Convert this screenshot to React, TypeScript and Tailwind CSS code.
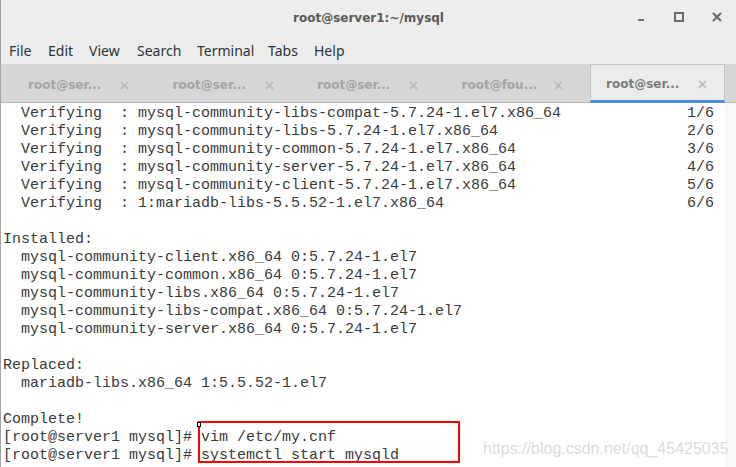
const mono = "font-['Liberation_Mono',monospace]";

const verify = (name: string, n: number) =>
  ('  Verifying  : ' + name).padEnd(76, ' ') + n + '/6';

const lines = [
  verify('mysql-community-libs-compat-5.7.24-1.el7.x86_64', 1),
  verify('mysql-community-libs-5.7.24-1.el7.x86_64', 2),
  verify('mysql-community-common-5.7.24-1.el7.x86_64', 3),
  verify('mysql-community-server-5.7.24-1.el7.x86_64', 4),
  verify('mysql-community-client-5.7.24-1.el7.x86_64', 5),
  verify('1:mariadb-libs-5.5.52-1.el7.x86_64', 6),
  '',
  'Installed:',
  '  mysql-community-client.x86_64 0:5.7.24-1.el7',
  '  mysql-community-common.x86_64 0:5.7.24-1.el7',
  '  mysql-community-libs.x86_64 0:5.7.24-1.el7',
  '  mysql-community-libs-compat.x86_64 0:5.7.24-1.el7',
  '  mysql-community-server.x86_64 0:5.7.24-1.el7',
  '',
  'Replaced:',
  '  mariadb-libs.x86_64 1:5.5.52-1.el7',
  '',
  'Complete!',
  '[root@server1 mysql]# vim /etc/my.cnf',
  '[root@server1 mysql]# systemctl start mysqld',
];

const menus = [
  { label: 'File', w: 'w-[39px]' },
  { label: 'Edit', w: 'w-[41px]' },
  { label: 'View', w: 'w-[48px]' },
  { label: 'Search', w: 'w-[60px]' },
  { label: 'Terminal', w: 'w-[71px]' },
  { label: 'Tabs', w: 'w-[46px]' },
  { label: 'Help', w: 'w-[40px]' },
];

const tabs = ['root@ser...', 'root@ser...', 'root@ser...', 'root@fou...', 'root@ser...'];

function TabClose({ color }: { color: string }) {
  return (
    <svg width="9" height="9" viewBox="0 0 9 9" className="shrink-0">
      <path d="M1 1 L8 8 M8 1 L1 8" stroke={color} strokeWidth="1.3" />
    </svg>
  );
}

export default function App() {
  return (
    <div className="w-[736px] h-[467px] overflow-hidden flex flex-col border-l border-[#a3a3a3] bg-[#ededed]">
      {/* title bar */}
      <div className="h-[33px] grid grid-cols-[1fr_auto_1fr] items-center">
        <div />
        <div className="font-['DejaVu_Sans',sans-serif] font-bold text-[12px] text-[#595959] pt-[2px]">
          root@server1:~/mysql
        </div>
        <div className="flex justify-end items-center gap-[22px] pr-[11px]">
          <svg width="16" height="16" viewBox="0 0 16 16">
            <rect x="5" y="10" width="6" height="2" fill="#6b6b6b" />
          </svg>
          <svg width="16" height="16" viewBox="0 0 16 16">
            <rect x="4" y="4" width="8" height="8" fill="none" stroke="#6b6b6b" strokeWidth="2" />
          </svg>
          <svg width="16" height="16" viewBox="0 0 16 16">
            <path d="M4 4 L12 12 M12 4 L4 12" stroke="#6b6b6b" strokeWidth="2.2" />
          </svg>
        </div>
      </div>

      {/* menu bar */}
      <div className="h-[31px] flex items-center pl-[8px] font-['Noto_Sans',sans-serif] text-[14px] text-[#2e3436] pt-[3px]">
        {menus.map((m) => (
          <span key={m.label} className={m.w}>
            {m.label}
          </span>
        ))}
      </div>

      {/* tabs */}
      <div className="h-[39px] flex items-stretch pl-[11px] gap-[9.5px] bg-[#d6d6d6] border-b border-[#b5b5b5] font-['DejaVu_Sans',sans-serif] font-bold text-[12px]">
        {tabs.map((t, i) => {
          const active = i === tabs.length - 1;
          return (
            <div
              key={i}
              className={
                active
                  ? 'w-[135px] flex items-center bg-[#ececec] border-x border-t border-[#c2c2c2] -mb-px border-b-[3px] border-b-[#4a90d9] pl-[15px] pt-[3px]'
                  : 'w-[135px] flex items-center pl-[16px] pt-[4px]'
              }
            >
              <span className={active ? 'w-[92px] text-[#7b7b7b]' : 'w-[92px] text-[#a3a3a3]'}>{t}</span>
              <TabClose color={active ? '#b4b4b4' : '#b3b3b3'} />
            </div>
          );
        })}
      </div>

      {/* terminal */}
      <div className="flex-1 flex bg-white relative">
        <pre className={`${mono} flex-1 text-[15px] leading-[18px] text-[#3a3a3a] pl-[2px] pt-[2px] whitespace-pre`}>
          {lines.join('\n')}
        </pre>
        <div className="w-[11px] bg-[#f8f8f8]" />

        {/* annotation box */}
        <div className="absolute left-[197px] top-[318px] w-[262px] h-[42px] border-2 border-[#ff0000]" />
        <div className="absolute left-[196px] top-[319px] w-[4px] h-[5px] border border-black bg-white" />

        {/* watermark */}
        <div className="absolute left-[482px] top-[337px] font-['Liberation_Sans',sans-serif] text-[16px] leading-[18px] text-[#dcdcdc]">
          https://blog.csdn.net/qq_45425035
        </div>
      </div>
    </div>
  );
}
